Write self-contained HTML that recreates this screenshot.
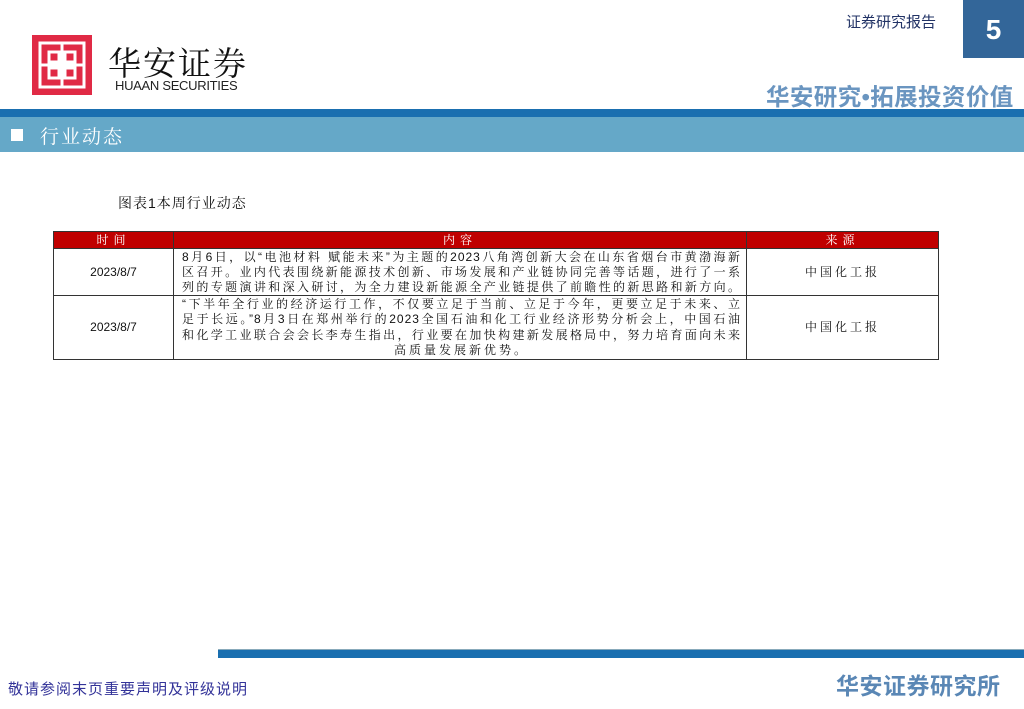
<!DOCTYPE html>
<html><head><meta charset="utf-8"><style>
*{margin:0;padding:0;box-sizing:border-box}
body{width:1024px;height:709px;position:relative;background:#fff;font-family:"Liberation Sans","Noto Sans CJK SC",sans-serif;overflow:hidden}
.a{position:absolute}
table{border-collapse:collapse;position:absolute;left:53px;top:231px;width:886px;font-size:12px;font-family:"Liberation Sans","Noto Serif CJK SC",sans-serif;table-layout:fixed}
td{border:1px solid #333;text-align:center;color:#111;line-height:15px;overflow:hidden}
th{background:#c00000;color:#fff;font-weight:normal;height:17px;border:1px solid #333;font-size:12px;letter-spacing:5px;line-height:15px}
td.c{padding:0 5px 0 8px;letter-spacing:1px}
td.c div{text-align:justify;text-align-last:justify;white-space:nowrap}
td.c div.l{text-align:center;text-align-last:center;letter-spacing:3px}
td.s{letter-spacing:3px}
</style></head><body>
<div class="a" style="left:32px;top:35px;width:60px;height:60px;background:#e02a45"></div>
<svg class="a" style="left:32px;top:35px" width="60" height="60"><g fill="none" stroke="#fff" stroke-width="3"><rect x="8" y="8" width="44" height="44"/><rect x="17" y="17" width="10" height="10"/><rect x="33" y="17" width="10" height="10"/><rect x="17" y="33" width="10" height="10"/><rect x="33" y="33" width="10" height="10"/><line x1="30" y1="8" x2="30" y2="52"/><line x1="8" y1="30" x2="52" y2="30"/></g></svg>
<div class="a" style="left:108px;top:38px;font-size:33px;font-family:'Noto Serif CJK SC',serif;letter-spacing:2px;color:#111">华安证券</div>
<div class="a" style="left:115px;top:78px;font-size:13px;font-family:'Liberation Sans',sans-serif;color:#222;letter-spacing:-0.3px">HUAAN SECURITIES</div>
<div class="a" style="left:846px;top:11px;font-size:15px;color:#223366">证券研究报告</div>
<div class="a" style="left:963px;top:0;width:61px;height:58px;background:#336699;color:#fff;font-size:28px;font-weight:bold;text-align:center;line-height:60px">5</div>
<div class="a" style="left:766px;top:78px;font-size:23.5px;font-weight:bold;color:#6a95c0;letter-spacing:0.4px">华安研究•拓展投资价值</div>
<div class="a" style="left:0;top:109px;width:1024px;height:8px;background:#1a6fb0"></div>
<div class="a" style="left:0;top:117px;width:1024px;height:35px;background:#65a8c8"></div>
<div class="a" style="left:11px;top:129px;width:12px;height:12px;background:#fff"></div>
<div class="a" style="left:40px;top:122px;font-size:19px;color:#fff;letter-spacing:2px;font-family:'Noto Serif CJK SC',serif">行业动态</div>
<div class="a" style="left:118px;top:193px;font-size:14px;color:#111;letter-spacing:1px;font-family:'Liberation Sans','Noto Serif CJK SC',serif">图表1本周行业动态</div>
<table>
<tr><th style="width:120px">时间</th><th style="width:573px">内容</th><th>来源</th></tr>
<tr style="height:47px"><td>2023/8/7</td><td class="c"><div>8月6日，以“电池材料 赋能未来”为主题的2023八角湾创新大会在山东省烟台市黄渤海新</div><div>区召开。业内代表围绕新能源技术创新、市场发展和产业链协同完善等话题，进行了一系</div><div>列的专题演讲和深入研讨，为全力建设新能源全产业链提供了前瞻性的新思路和新方向。</div></td><td class="s">中国化工报</td></tr>
<tr style="height:64px"><td>2023/8/7</td><td class="c" style="line-height:15.5px"><div>“下半年全行业的经济运行工作，不仅要立足于当前、立足于今年，更要立足于未来、立</div><div>足于长远。”8月3日在郑州举行的2023全国石油和化工行业经济形势分析会上，中国石油</div><div>和化学工业联合会会长李寿生指出，行业要在加快构建新发展格局中，努力培育面向未来</div><div class="l">高质量发展新优势。</div></td><td class="s">中国化工报</td></tr>
</table>
<div class="a" style="left:218px;top:649px;width:806px;height:9px;background:#1a6fb0;border-top:1px solid #8ab"></div>
<div class="a" style="left:8px;top:678px;font-size:15px;color:#333399;letter-spacing:1px">敬请参阅末页重要声明及评级说明</div>
<div class="a" style="left:836px;top:667px;font-size:23px;font-weight:bold;color:#5a87b5;letter-spacing:0.5px">华安证券研究所</div>
</body></html>
